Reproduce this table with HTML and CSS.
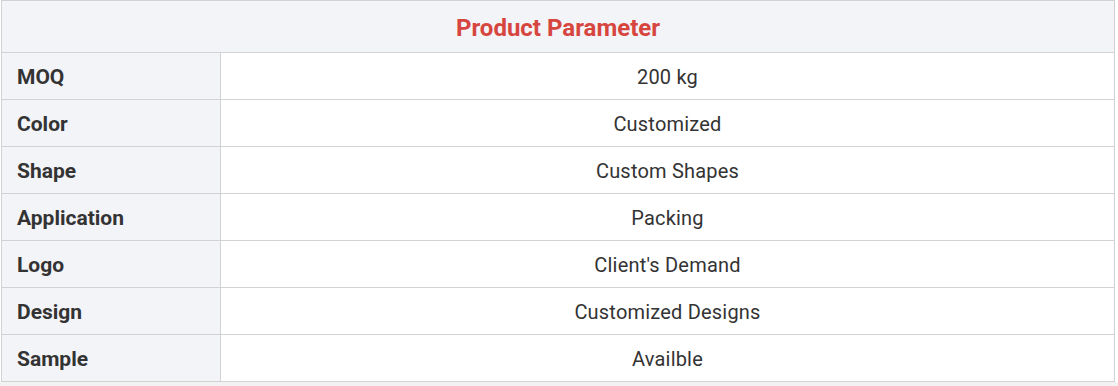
FILE: index.html
```html
<!DOCTYPE html>
<html>
<head>
<meta charset="utf-8">
<link rel="stylesheet" href="styles.css">
</head>
<body>
<div class="wrap">
<table class="params">
  <colgroup>
    <col class="col-label">
    <col class="col-value">
  </colgroup>
  <thead>
    <tr><th colspan="2" class="title">Product Parameter</th></tr>
  </thead>
  <tbody>
    <tr><td class="label">MOQ</td><td class="value">200 kg</td></tr>
    <tr><td class="label">Color</td><td class="value">Customized</td></tr>
    <tr><td class="label">Shape</td><td class="value">Custom Shapes</td></tr>
    <tr><td class="label">Application</td><td class="value">Packing</td></tr>
    <tr><td class="label">Logo</td><td class="value">Client's Demand</td></tr>
    <tr><td class="label">Design</td><td class="value">Customized Designs</td></tr>
    <tr><td class="label">Sample</td><td class="value">Availble</td></tr>
  </tbody>
</table>
</div>
</body>
</html>
```
FILE: styles.css
```css
html, body {
  margin: 0;
  padding: 0;
  background: #f2f2f2;
}
.wrap {
  background: #ffffff;
  padding-left: 1px;
  width: 1117px;
}
.params {
  border-collapse: collapse;
  width: 1114px;
  table-layout: fixed;
  font-family: Roboto, "Liberation Sans", sans-serif;
  color: #333333;
}
.col-label {
  width: 219px;
}
.params .title,
.params .label,
.params .value {
  border: 1px solid #d2d2d2;
  padding: 2px 0 0 0;
}
.params .title {
  height: 49px;
  background: #f3f4f8;
  color: #d6463f;
  font-size: 24px;
  font-weight: 700;
  text-align: center;
}
.params .label {
  height: 44px;
  background: #f3f4f8;
  font-size: 21px;
  font-weight: 700;
  padding-left: 15px;
  text-align: left;
}
.params .value {
  background: #ffffff;
  font-size: 20px;
  letter-spacing: 0.2px;
  text-align: center;
}
```
